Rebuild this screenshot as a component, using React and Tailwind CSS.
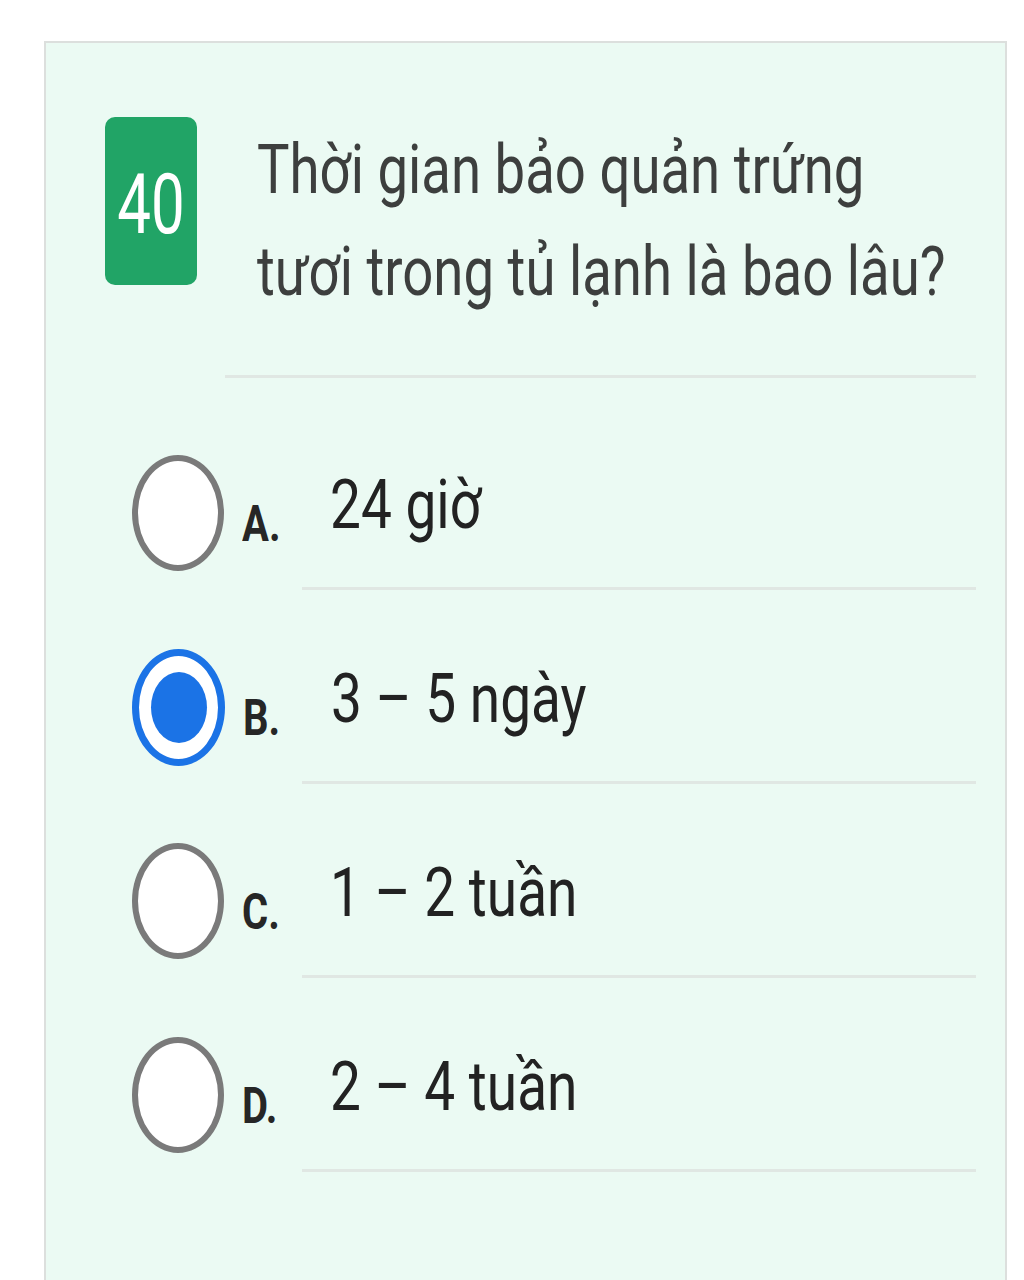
import React from "react";

const options = [
  { label: "A.", text: "24 giờ", selected: false },
  { label: "B.", text: "3 – 5 ngày", selected: true },
  { label: "C.", text: "1 – 2 tuần", selected: false },
  { label: "D.", text: "2 – 4 tuần", selected: false },
];

function Radio({ selected }) {
  if (selected) {
    return (
      <div className="w-[93px] h-[117px] shrink-0 rounded-[50%] border-[7px] border-[#1b73e6] bg-white flex items-center justify-center">
        <div className="w-[56px] h-[71px] rounded-[50%] bg-[#1b73e6]" />
      </div>
    );
  }
  return (
    <div className="w-[92px] h-[116px] shrink-0 rounded-[50%] border-[6px] border-[#7a7a7a] bg-white" />
  );
}

export default function App() {
  return (
    <div className="h-[1280px] overflow-hidden bg-white pt-[41px] pl-[44px] font-['Roboto',sans-serif]">
      <div className="w-[963px] h-[1300px] border-2 border-[#dcdfdd] bg-[#ebfaf3]">
        {/* header */}
        <div className="flex items-start pt-[74px] pl-[59px]">
          <div className="w-[92px] h-[168px] shrink-0 rounded-[10px] bg-[#21a466] flex items-center justify-center pt-[8px]">
            <span className="block text-[60px] leading-none text-white scale-y-[1.4]">40</span>
          </div>
          <div className="ml-[60px] mt-[1px] text-[54.5px] leading-[80px] text-[#3d3f3e] origin-top scale-y-[1.27] whitespace-nowrap">
            <div>Thời gian bảo quản trứng</div>
            <div>tươi trong tủ lạnh là bao lâu?</div>
          </div>
        </div>
        <div className="mt-[90px] ml-[179px] mr-[29px] h-[3px] bg-[#e0e7e3]" />

        {/* options */}
        <div className="mt-[18px]">
          {options.map((o) => (
            <div key={o.label}>
              <div className="flex items-start pt-[59px] pl-[86px] h-[175px]">
                <Radio selected={o.selected} />
                <div className="w-[88px] ml-[18px] mt-[45px] shrink-0">
                  <span className="block text-[40px] leading-none font-bold text-[#262626] origin-top scale-y-[1.25]">
                    {o.label}
                  </span>
                </div>
                <span className="block mt-[15px] text-[55px] leading-none text-[#222222] origin-top scale-y-[1.26] whitespace-nowrap">
                  {o.text}
                </span>
              </div>
              <div className="mt-[16px] ml-[256px] mr-[29px] h-[3px] bg-[#e0e7e3]" />
            </div>
          ))}
        </div>
      </div>
    </div>
  );
}
